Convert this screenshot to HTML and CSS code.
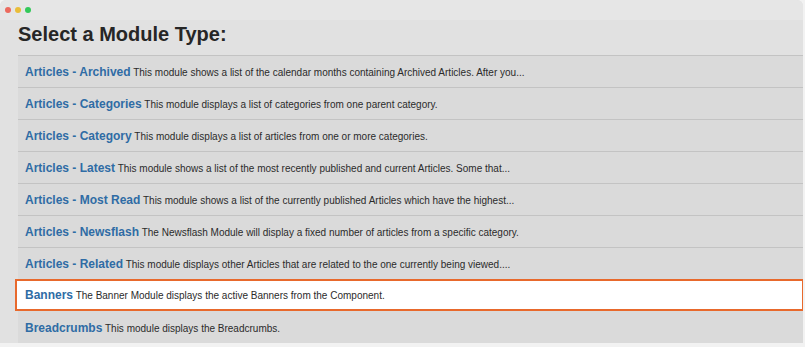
FILE: index.html
```html
<!DOCTYPE html>
<html lang="en">
<head>
  <meta charset="UTF-8">
  <title>Select a Module Type</title>
  <link rel="stylesheet" href="styles.css">
</head>
<body>
  <div class="window">
    <div class="titlebar">
      <span class="dot red"></span>
      <span class="dot yellow"></span>
      <span class="dot green"></span>
    </div>
    <div class="content">
      <h1>Select a Module Type:</h1>
      <ul class="modules">
        <li><a href="#">Articles - Archived</a> This module shows a list of the calendar months containing Archived Articles. After you...</li>
        <li><a href="#">Articles - Categories</a> This module displays a list of categories from one parent category.</li>
        <li><a href="#">Articles - Category</a> This module displays a list of articles from one or more categories.</li>
        <li><a href="#">Articles - Latest</a> This module shows a list of the most recently published and current Articles. Some that...</li>
        <li><a href="#">Articles - Most Read</a> This module shows a list of the currently published Articles which have the highest...</li>
        <li><a href="#">Articles - Newsflash</a> The Newsflash Module will display a fixed number of articles from a specific category.</li>
        <li><a href="#">Articles - Related</a> This module displays other Articles that are related to the one currently being viewed....</li>
        <li class="active"><a href="#">Banners</a> The Banner Module displays the active Banners from the Component.</li>
        <li><a href="#">Breadcrumbs</a> This module displays the Breadcrumbs.</li>
      </ul>
    </div>
  </div>
</body>
</html>
```

FILE: styles.css
```css
body {
  margin: 0;
  background: #f2f2f2;
  font-family: 'Liberation Sans', Arial, sans-serif;
}
.window {
  width: 803px;
  height: 343px;
  background: #e1e1e1;
  border-radius: 6px 6px 0 0;
  overflow: hidden;
}
.titlebar {
  height: 20px;
  background: #e6e6e6;
  display: flex;
  align-items: center;
  gap: 4px;
  padding-left: 5px;
}
.dot {
  width: 6px;
  height: 6px;
  border-radius: 50%;
}
.red { background: #ec6a5e; }
.yellow { background: #e9bd3a; }
.green { background: #33c95a; }
.content {
  padding-left: 18px;
}
h1 {
  margin: 0;
  height: 35px;
  line-height: 29px;
  font-size: 20px;
  font-weight: bold;
  color: #262626;
}
.modules {
  list-style: none;
  margin: 0;
  padding: 0;
  background: #dadada;
}
.modules li {
  height: 31px;
  line-height: 32px;
  border-top: 1px solid #c3c3c3;
  padding-left: 7px;
  font-size: 10px;
  color: #2b2b2b;
  white-space: nowrap;
}
.modules li a {
  color: #2f6ca5;
  font-size: 12px;
  font-weight: bold;
  text-decoration: none;
}
.modules li.active {
  background: #fff;
  border: 2px solid #e8692c;
  height: 28px;
  line-height: 29px;
  margin-left: -3px;
  margin-right: -1px;
  padding-left: 8px;
}
.modules li.active + li {
  border-top: 1px solid #dadada;
}
```
